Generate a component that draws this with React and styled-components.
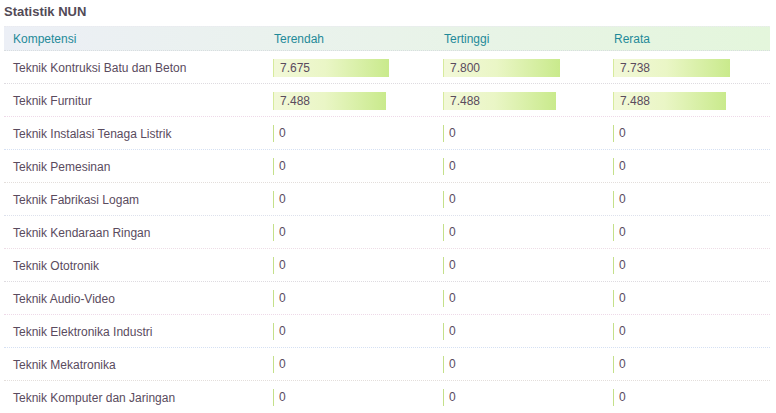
import React from "react";
import styled, { createGlobalStyle } from "styled-components";

const rows = [
  { name: "Teknik Kontruksi Batu dan Beton", values: ["7.675", "7.800", "7.738"], widths: [116, 117, 117] },
  { name: "Teknik Furnitur", values: ["7.488", "7.488", "7.488"], widths: [113, 113, 113] },
  { name: "Teknik Instalasi Tenaga Listrik" },
  { name: "Teknik Pemesinan" },
  { name: "Teknik Fabrikasi Logam" },
  { name: "Teknik Kendaraan Ringan" },
  { name: "Teknik Ototronik" },
  { name: "Teknik Audio-Video" },
  { name: "Teknik Elektronika Industri" },
  { name: "Teknik Mekatronika" },
  { name: "Teknik Komputer dan Jaringan" },
];

const lineColors = ["#dedbe0", "#eed9e8", "#d5e0f3", "#e3dedb", "#dde1ec", "#eddde6"];

const App = () => {
  return (
    <>
      <GlobalStyle />
      <Container>
        <Title>Statistik NUN</Title>
        <Table>
          <HeadRow>
            <HeadCell first>Kompetensi</HeadCell>
            <HeadCell>Terendah</HeadCell>
            <HeadCell>Tertinggi</HeadCell>
            <HeadCell>Rerata</HeadCell>
          </HeadRow>
          {rows.map((r, i) => (
            <Row key={r.name} line={lineColors[i % lineColors.length]}>
              <NameCell>{r.name}</NameCell>
              {[0, 1, 2].map((k) => (
                <ValueCell key={k}>
                  {r.values ? (
                    <Bar style={{ width: r.widths[k] }}>{r.values[k]}</Bar>
                  ) : (
                    <Zero>0</Zero>
                  )}
                </ValueCell>
              ))}
            </Row>
          ))}
        </Table>
      </Container>
    </>
  );
};

const GlobalStyle = createGlobalStyle`
  body {
    margin: 0;
    background: #fff;
    font-family: "Liberation Sans", Arial, sans-serif;
  }
`;

const Container = styled.div`
  width: 776px;
  height: 413px;
  padding: 4px 6px 0 4px;
  box-sizing: border-box;
  overflow: hidden;
  color: #5a4b5e;
`;

const Title = styled.div`
  font-size: 13px;
  font-weight: 700;
  color: #524a56;
  height: 22px;
  line-height: 15px;
`;

const Table = styled.div`
  display: flex;
  flex-direction: column;
`;

const HeadRow = styled.div`
  display: grid;
  grid-template-columns: 269px 170px 170px 157px;
  height: 25px;
  align-items: center;
  background: linear-gradient(to right, #eceff6, #e9f3ea 50%, #e4f6dc);
  border-top: 1px dotted #eaeaf0;
  border-bottom: 1px dotted #d8dde0;
  box-sizing: border-box;
`;

const HeadCell = styled.div`
  font-size: 12px;
  color: #1f8a99;
  padding-left: ${(p) => (p.first ? "9px" : "1px")};
`;

const Row = styled.div`
  display: grid;
  grid-template-columns: 269px 170px 170px 157px;
  height: 33px;
  align-items: center;
  border-bottom: 1px dotted ${(p) => p.line};
  box-sizing: border-box;
  font-size: 12px;
`;

const NameCell = styled.div`
  padding-left: 9px;
  padding-top: 1px;
`;

const ValueCell = styled.div`
  display: flex;
  align-items: center;
  padding-top: 1px;
`;

const Bar = styled.div`
  height: 18px;
  line-height: 18px;
  padding-left: 6px;
  box-sizing: border-box;
  background: linear-gradient(to right, #f2f8d8, #eaf6c6 45%, #c9ea8c);
  border-left: 1px solid #d6ea9c;
`;

const Zero = styled.div`
  height: 17px;
  line-height: 17px;
  padding-left: 5px;
  border-left: 1px solid #c4e08a;
`;

export default App;
